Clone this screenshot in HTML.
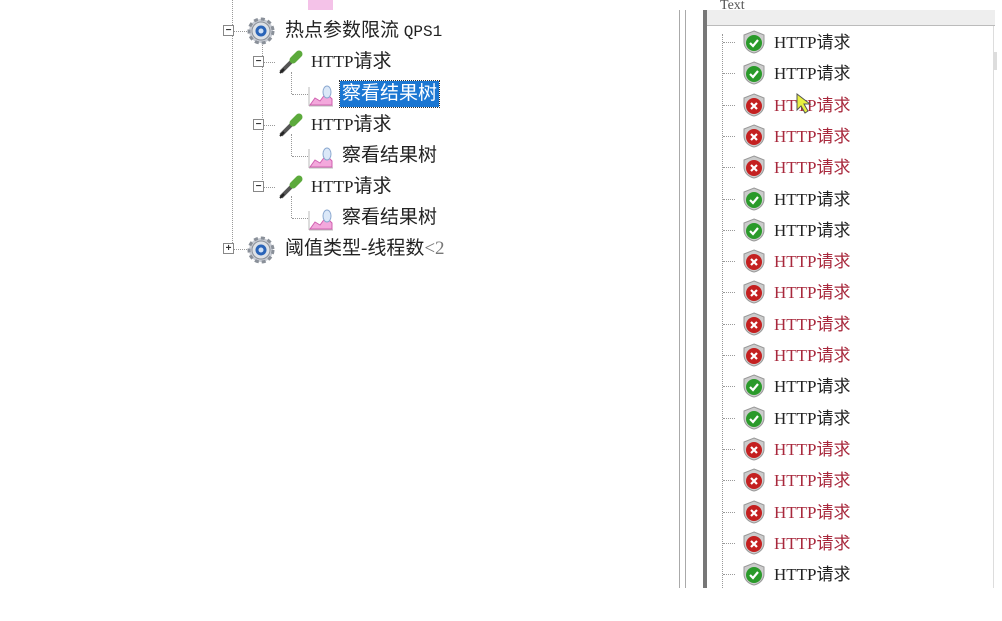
<!DOCTYPE html>
<html><head><meta charset="utf-8"><style>
body{margin:0;width:1002px;height:621px;background:#fff;position:relative;overflow:hidden;font-family:"Liberation Serif","Noto Sans CJK SC",serif;font-size:17px;color:#222}
.a{position:absolute}
.t{position:absolute;white-space:nowrap;line-height:20px}
.c{font-size:19px}
.dv{position:absolute;border-left:1px dotted #999}
.dh{position:absolute;border-top:1px dotted #999}
.box{position:absolute;width:9px;height:9px;border:1px solid #888;background:#fff;font:bold 10px/9px "Liberation Sans",sans-serif;text-align:center;color:#333}
</style></head><body>
<div class="dv" style="left:232px;top:0;height:245px"></div>
<div class="dv" style="left:262px;top:40px;height:150px"></div>
<div class="dv" style="left:291px;top:72px;height:22px"></div>
<div class="dv" style="left:291px;top:134px;height:22px"></div>
<div class="dv" style="left:291px;top:196px;height:22px"></div>
<div class="a" style="left:308px;top:0;width:25px;height:10px;background:#f4c2e8"></div>

<svg class="a" style="left:0;top:0" width="680" height="270">
<defs>
<g id="gear"><circle cx="0" cy="0" r="12" fill="#c8ccd4" stroke="#8a9099" stroke-dasharray="4 3" stroke-width="3"/><circle r="9" fill="#dde1e6" stroke="#8a9099"/><circle r="5.5" fill="#2a64b8"/><circle r="2.5" fill="#cfe0f5"/></g>
<g id="pip"><path d="M-10 10 L4 -4" stroke="#555" stroke-width="4"/><path d="M-11 11 L-7 7" stroke="#222" stroke-width="2"/><path d="M2 -2 L8 -8" stroke="#5caa3c" stroke-width="7" stroke-linecap="round"/></g>
<g id="chart"><path d="M-12 11 V-8 M-12 11 H12" stroke="#bbb" fill="none"/><path d="M-11 10 L-6 3 L-1 6 L5 -2 L11 4 L11 10 Z" fill="#f3a8dc" stroke="#d060b0"/><ellipse cx="6" cy="-3" rx="4" ry="6" fill="#dbe8f8" stroke="#8aa8d0"/></g>
</defs>
<use href="#gear" x="261" y="31"/>
<use href="#pip" x="291" y="62"/><use href="#chart" x="321" y="95"/>
<use href="#pip" x="291" y="125"/><use href="#chart" x="321" y="157"/>
<use href="#pip" x="291" y="187"/><use href="#chart" x="321" y="219"/>
<use href="#gear" x="261" y="250"/>
</svg>
<div class="dh" style="left:233px;top:31px;width:14px"></div>
<div class="dh" style="left:263px;top:62px;width:12px"></div>
<div class="dh" style="left:292px;top:94px;width:16px"></div>
<div class="dh" style="left:263px;top:125px;width:12px"></div>
<div class="dh" style="left:292px;top:156px;width:16px"></div>
<div class="dh" style="left:263px;top:187px;width:12px"></div>
<div class="dh" style="left:292px;top:218px;width:16px"></div>
<div class="dh" style="left:233px;top:249px;width:14px"></div>
<div class="box" style="left:223px;top:25px">−</div>
<div class="box" style="left:253px;top:56px">−</div>
<div class="box" style="left:253px;top:119px">−</div>
<div class="box" style="left:253px;top:181px">−</div>
<div class="box" style="left:223px;top:243px">+</div>
<div class="t c" style="left:285px;top:21px">热点参数限流 <span style="font-family:'Liberation Mono',monospace;font-size:16px">QPS1</span></div>
<div class="t" style="left:311px;top:52px">HTTP<span class="c">请求</span></div>
<div class="a" style="left:340px;top:81px;width:99px;height:26px;background:#1a76d2;outline:1px dotted #333"></div>
<div class="t c" style="left:342px;top:84px;color:#fff">察看结果树</div>
<div class="t" style="left:311px;top:115px">HTTP<span class="c">请求</span></div>
<div class="t c" style="left:342px;top:146px">察看结果树</div>
<div class="t" style="left:311px;top:177px">HTTP<span class="c">请求</span></div>
<div class="t c" style="left:342px;top:208px">察看结果树</div>
<div class="t c" style="left:285px;top:239px">阈值类型-线程数<span style="color:#777">&lt;2</span></div>

<div class="a" style="left:679px;top:10px;width:1px;height:578px;background:#aaa"></div>
<div class="a" style="left:685px;top:10px;width:1px;height:578px;background:#aaa"></div>
<div class="a" style="left:703px;top:10px;width:4px;height:578px;background:#777"></div>
<div class="a" style="left:707px;top:10px;width:288px;height:15px;background:#eee;border-bottom:1px solid #bbb"></div>
<div class="a" style="left:720px;top:0px;font-size:14px;color:#555;line-height:12px;height:12px;overflow:hidden">Text</div>
<div class="a" style="left:993px;top:26px;width:1px;height:562px;background:#ddd"></div>
<div class="a" style="left:993px;top:52px;width:4px;height:18px;background:#ddd"></div>
<div class="dv" style="left:722px;top:34px;height:554px"></div>
<div id="r"></div>
<script>
var s="GGRRRGGRRRRGGRRRRG",h="";
for(var i=0;i<18;i++){var y=42+i*31.3,g=s[i]=="G";
h+='<div class="dh" style="left:723px;top:'+Math.round(y)+'px;width:12px"></div>';
h+='<svg class="a" style="left:741px;top:'+Math.round(y-13)+'px" width="26" height="26"><path d="M13 2 L23 6 V13 C23 19 18 23 13 24 C8 23 3 19 3 13 V6 Z" fill="#ccc" stroke="#999"/><circle cx="13" cy="14" r="8" fill="'+(g?'#2a9a2a':'#c42020')+'"/>'+(g?'<path d="M9 14 L12 17 L17 11" stroke="#fff" stroke-width="2.2" fill="none"/>':'<path d="M10 11 L16 17 M16 11 L10 17" stroke="#fff" stroke-width="2.2"/>')+'</svg>';
h+='<div class="t" style="left:774px;top:'+Math.round(y-9)+'px;color:'+(g?'#222':'#a8283c')+'">HTTP请求</div>';}
document.getElementById('r').innerHTML=h;
</script>
<svg class="a" style="left:795px;top:92px" width="18" height="24"><path d="M2 2 L2 18 L6 14 L10 21 L13 19 L9 12 L15 12 Z" fill="#e8f040" stroke="#555"/></svg>
</body></html>
